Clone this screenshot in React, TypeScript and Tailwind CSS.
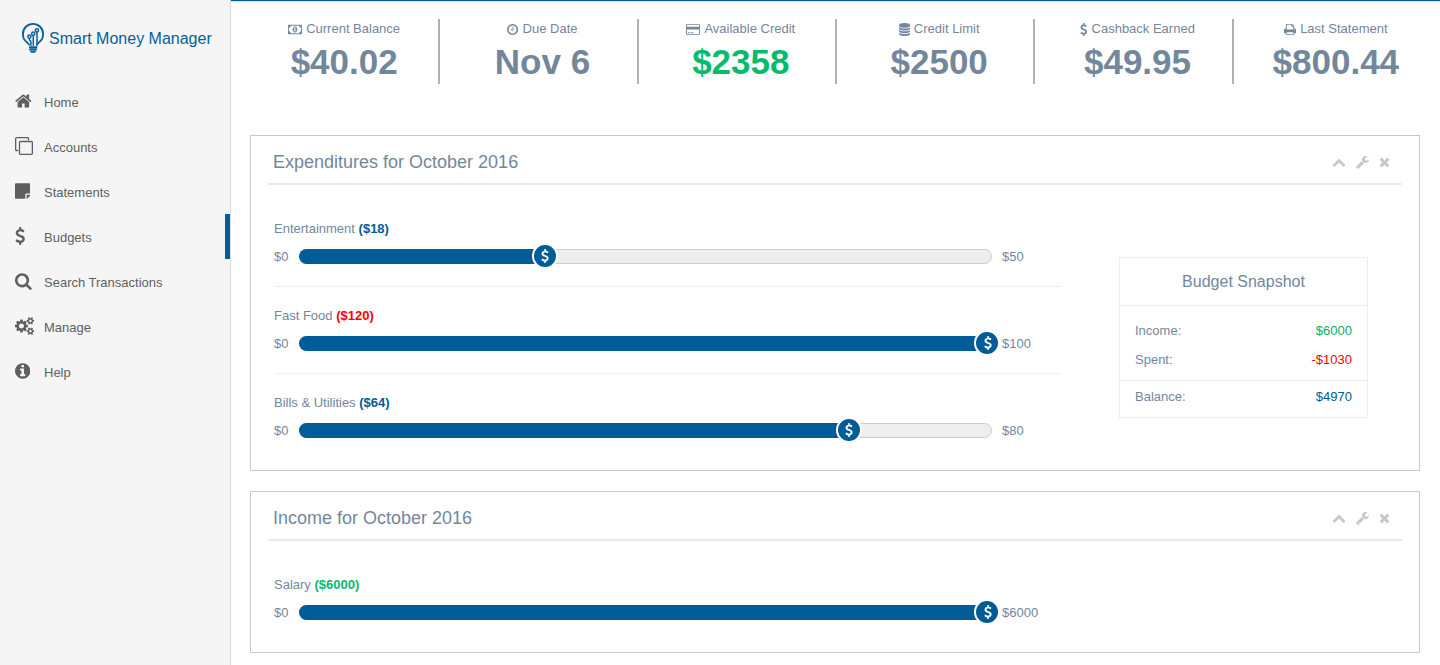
import { useState } from "react"
import type { ReactNode } from "react"
import clsx from "clsx"

// Font Awesome 4 glyphs: [viewBox, path]
const glyphs = {
  home: ["64 0 1664 1792", "M1472 992v480q0 26-19 45t-45 19h-384v-384h-256v384h-384q-26 0-45-19t-19-45v-480q0-1 .5-3t.5-3l575-474 575 474q1 2 1 6zm223-69l-62 74q-8 9-21 11h-3q-13 0-21-7l-692-577-692 577q-12 8-24 7-13-2-21-11l-62-74q-8-10-7-23.5t11-21.5l719-599q32-26 76-26t76 26l244 204v-195q0-14 9-23t23-9h192q14 0 23 9t9 23v408l219 182q10 8 11 21.5t-7 23.5z"],
  clone: ["0 0 1792 1792", "M1664 1632v-1088q0-13-9.5-22.5t-22.5-9.5h-1088q-13 0-22.5 9.5t-9.5 22.5v1088q0 13 9.5 22.5t22.5 9.5h1088q13 0 22.5-9.5t9.5-22.5zm128-1088v1088q0 66-47 113t-113 47h-1088q-66 0-113-47t-47-113v-1088q0-66 47-113t113-47h1088q66 0 113 47t47 113zm-384-384v160h-128v-160q0-13-9.5-22.5t-22.5-9.5h-1088q-13 0-22.5 9.5t-9.5 22.5v1088q0 13 9.5 22.5t22.5 9.5h160v128h-160q-66 0-113-47t-47-113v-1088q0-66 47-113t113-47h1088q66 0 113 47t47 113z"],
  note: ["128 0 1536 1792", "M1152 1248v416h-928q-40 0-68-28t-28-68v-1344q0-40 28-68t68-28h1344q40 0 68 28t28 68v928h-416q-40 0-68 28t-28 68zm128 32h381q-15 82-65 132l-184 184q-50 50-132 65v-381z"],
  dollar: ["384 0 1024 1792", "M1362 1185q0 153-99.5 263.5t-258.5 136.5v175q0 14-9 23t-23 9h-135q-13 0-22.5-9.5t-9.5-22.5v-175q-66-9-127.5-31t-101.5-44.5-74-48-46.5-37.5-17.5-18q-17-21-2-41l103-135q7-10 23-12 15-2 24 9l2 2q113 99 243 125 37 8 74 8 81 0 142.5-43t61.5-122q0-28-15-53t-33.5-42-58.5-37.5-66-32-80-32.5q-39-16-61.5-25t-61.5-26.5-62.5-31-56.5-35.5-53.5-42.5-43.5-49-35.5-58-21-66.5-8.5-78q0-138 98-242t255-134v-180q0-13 9.5-22.5t22.5-9.5h135q14 0 23 9t9 23v176q57 6 110.5 23t87 33.5 63.5 37.5 39 29 15 14q17 18 5 38l-81 146q-8 15-23 16-14 3-27-7-3-3-14.5-12t-39-26.5-58.5-32-74.5-26-85.5-11.5q-95 0-155 43t-60 111q0 26 8.5 48t29.5 41.5 39.5 33 56 31 60.5 27 70 27.5q53 20 81 31.5t76 35 75.5 42.5 62 50 53 63.5 31.5 76.5 13 94z"],
  search: ["64 0 1664 1792", "M1216 832q0-185-131.5-316.5t-316.5-131.5-316.5 131.5-131.5 316.5 131.5 316.5 316.5 131.5 316.5-131.5 131.5-316.5zm512 832q0 52-38 90t-90 38q-54 0-90-38l-343-342q-179 124-399 124-143 0-273.5-55.5t-225-150-150-225-55.5-273.5 55.5-273.5 150-225 225-150 273.5-55.5 273.5 55.5 225 150 150 225 55.5 273.5q0 220-124 399l343 343q37 37 37 90z"],
  cogs: ["0 0 1920 1792", "M896 896q0-106-75-181t-181-75-181 75-75 181 75 181 181 75 181-75 75-181zm768 512q0-52-38-90t-90-38-90 38-38 90q0 53 37.5 90.5t90.5 37.5 90.5-37.5 37.5-90.5zm0-1024q0-52-38-90t-90-38-90 38-38 90q0 53 37.5 90.5t90.5 37.5 90.5-37.5 37.5-90.5zm-384 421v185q0 10-7 19.5t-16 10.5l-155 24q-11 35-32 76 34 48 90 115 7 11 7 20 0 12-7 19-23 30-82.5 89.5t-78.5 59.5q-11 0-21-7l-115-90q-37 19-77 31-11 108-23 155-7 24-30 24h-186q-11 0-20-7.5t-10-17.5l-23-153q-34-10-75-31l-118 89q-7 7-20 7-11 0-21-8-144-133-144-160 0-9 7-19 10-14 41-53t47-61q-23-44-35-82l-152-24q-10-1-17-9.5t-7-19.5v-185q0-10 7-19.5t16-10.5l155-24q11-35 32-76-34-48-90-115-7-11-7-20 0-12 7-20 22-30 82-89t79-59q11 0 21 7l115 90q34-18 77-32 11-108 23-154 7-24 30-24h186q11 0 20 7.5t10 17.5l23 153q34 10 75 31l118-89q8-7 20-7 11 0 21 8 144 133 144 160 0 8-7 19-12 16-42 54t-45 60q23 48 34 82l152 23q10 2 17 10.5t7 19.5zm640 533v140q0 16-149 31-12 27-30 52 51 113 51 138 0 4-4 7-122 71-124 71-8 0-46-47t-52-68q-20 2-30 2t-30-2q-14 21-52 68t-46 47q-2 0-124-71-4-3-4-7 0-25 51-138-18-25-30-52-149-15-149-31v-140q0-16 149-31 13-29 30-52-51-113-51-138 0-4 4-7 4-2 35-20t59-34 30-16q8 0 46 46.5t52 67.5q20-2 30-2t30 2q51-71 92-112l6-2q4 0 124 70 4 3 4 7 0 25-51 138 17 23 30 52 149 15 149 31zm0-1024v140q0 16-149 31-12 27-30 52 51 113 51 138 0 4-4 7-122 71-124 71-8 0-46-47t-52-68q-20 2-30 2t-30-2q-14 21-52 68t-46 47q-2 0-124-71-4-3-4-7 0-25 51-138-18-25-30-52-149-15-149-31v-140q0-16 149-31 13-29 30-52-51-113-51-138 0-4 4-7 4-2 35-20t59-34 30-16q8 0 46 46.5t52 67.5q20-2 30-2t30 2q51-71 92-112l6-2q4 0 124 70 4 3 4 7 0 25-51 138 17 23 30 52 149 15 149 31z"],
  info: ["128 0 1536 1792", "M1152 1376v-160q0-14-9-23t-23-9h-96v-512q0-14-9-23t-23-9h-320q-14 0-23 9t-9 23v160q0 14 9 23t23 9h96v320h-96q-14 0-23 9t-9 23v160q0 14 9 23t23 9h448q14 0 23-9t9-23zm-128-896v-160q0-14-9-23t-23-9h-192q-14 0-23 9t-9 23v160q0 14 9 23t23 9h192q14 0 23-9t9-23zm640 416q0 209-103 385.5t-279.5 279.5-385.5 103-385.5-103-279.5-279.5-103-385.5 103-385.5 279.5-279.5 385.5-103 385.5 103 279.5 279.5 103 385.5z"],
  money: ["0 0 1920 1792", "M768 1152h384v-96h-128v-448h-114l-148 137 77 80q42-37 55-57h2v288h-128v96zm512-256q0 70-21 142t-59.5 134-101.5 101-138 39-138-39-101.5-101-59.5-134-21-142 21-142 59.5-134 101.5-101 138-39 138 39 101.5 101 59.5 134 21 142zm512 256v-512q-106 0-181-75t-75-181h-1152q0 106-75 181t-181 75v512q106 0 181 75t75 181h1152q0-106 75-181t181-75zm128-832v1152q0 26-19 45t-45 19h-1792q-26 0-45-19t-19-45v-1152q0-26 19-45t45-19h1792q26 0 45 19t19 45z"],
  clock: ["128 0 1536 1792", "M1024 544v448q0 14-9 23t-23 9h-320q-14 0-23-9t-9-23v-64q0-14 9-23t23-9h224v-352q0-14 9-23t23-9h64q14 0 23 9t9 23zm416 352q0-148-73-273t-198-198-273-73-273 73-198 198-73 273 73 273 198 198 273 73 273-73 198-198 73-273zm224 0q0 209-103 385.5t-279.5 279.5-385.5 103-385.5-103-279.5-279.5-103-385.5 103-385.5 279.5-279.5 385.5-103 385.5 103 279.5 279.5 103 385.5z"],
  card: ["0 0 1920 1792", "M1760 128q66 0 113 47t47 113v1216q0 66-47 113t-113 47h-1600q-66 0-113-47t-47-113v-1216q0-66 47-113t113-47h1600zm-1600 128q-13 0-22.5 9.5t-9.5 22.5v224h1664v-224q0-13-9.5-22.5t-22.5-9.5h-1600zm1600 1280q13 0 22.5-9.5t9.5-22.5v-608h-1664v608q0 13 9.5 22.5t22.5 9.5h1600zm-1504-128v-128h256v128h-256zm384 0v-128h384v128h-384z"],
  database: ["128 0 1536 1792", "M896 768q237 0 443-43t325-127v170q0 69-103 128t-280 93.5-385 34.5-385-34.5-280-93.5-103-128v-170q119 84 325 127t443 43zm0 768q237 0 443-43t325-127v170q0 69-103 128t-280 93.5-385 34.5-385-34.5-280-93.5-103-128v-170q119 84 325 127t443 43zm0-384q237 0 443-43t325-127v170q0 69-103 128t-280 93.5-385 34.5-385-34.5-280-93.5-103-128v-170q119 84 325 127t443 43zm0-1152q208 0 385 34.5t280 93.5 103 128v128q0 69-103 128t-280 93.5-385 34.5-385-34.5-280-93.5-103-128v-128q0-69 103-128t280-93.5 385-34.5z"],
  print: ["64 0 1664 1792", "M448 1536h896v-256h-896v256zm0-640h896v-384h-160q-40 0-68-28t-28-68v-160h-640v640zm1152 64q0-26-19-45t-45-19-45 19-19 45 19 45 45 19 45-19 19-45zm128 0v416q0 13-9.5 22.5t-22.5 9.5h-224v160q0 40-28 68t-68 28h-960q-40 0-68-28t-28-68v-160h-224q-13 0-22.5-9.5t-9.5-22.5v-416q0-79 56.5-135.5t135.5-56.5h64v-544q0-40 28-68t68-28h672q40 0 88 20t76 48l152 152q28 28 48 76t20 88v256h64q79 0 135.5 56.5t56.5 135.5z"],
  chevronUp: ["0 0 1792 1792", "M1683 1331l-166 165q-19 19-45 19t-45-19l-531-531-531 531q-19 19-45 19t-45-19l-166-165q-19-19-19-45.5t19-45.5l742-741q19-19 45-19t45 19l742 741q19 19 19 45.5t-19 45.5z"],
  wrench: ["64 0 1664 1792", "M448 1472q0-26-19-45t-45-19-45 19-19 45 19 45 45 19 45-19 19-45zm644-420l-682 682q-37 37-90 37-52 0-91-37l-106-108q-38-36-38-90 0-53 38-91l681-681q39 98 114.5 173.5t173.5 114.5zm634-435q0 39-23 106-47 134-164.5 217.5t-258.5 83.5q-185 0-316.5-131.5t-131.5-316.5 131.5-316.5 316.5-131.5q58 0 121.5 16.5t107.5 46.5q16 11 16 28t-16 28l-293 169v224l193 107q5-3 79-48.5t135.5-81 70.5-35.5q15 0 23.5 10t8.5 25z"],
  close: ["192 0 1408 1792", "M1490 1322q0 40-28 68l-136 136q-28 28-68 28t-68-28l-294-294-294 294q-28 28-68 28t-68-28l-136-136q-28-28-28-68t28-68l294-294-294-294q-28-28-28-68t28-68l136-136q28-28 68-28t68 28l294 294 294-294q28-28 68-28t68 28l136 136q28 28 28 68t-28 68l-294 294 294 294q28 28 28 68z"],
}

type IconName = keyof typeof glyphs

const Icon = ({ name, className }: { name: IconName; className: string }) => (
  <svg viewBox={glyphs[name][0]} fill="currentColor" aria-hidden="true" className={className}>
    <path d={glyphs[name][1]} />
  </svg>
)

const Logo = () => (
  <svg viewBox="0 0 24 32" fill="none" stroke="currentColor" aria-hidden="true" className="h-8 w-6">
    <path strokeWidth="1.8" d="M8.3 23.4C7.8 21.4 6.2 20.6 4.4 18.9C2.7 17.2 1.9 14.6 1.9 11.9a10.1 10.1 0 0 1 20.2 0c0 2.7-.8 5.3-2.500 7C17.8 20.6 16.2 21.4 15.7 23.4" />
    <path strokeWidth="1.5" d="M8.4 16.2v1.600l1.500 1.700v4.300M12.300 13.400v10.400M16 10v13.800" />
    <g strokeWidth="1.5">
      <circle cx="8.4" cy="14.6" r="1.6" />
      <circle cx="12.3" cy="11.7" r="1.6" />
      <circle cx="16" cy="8.3" r="1.6" />
    </g>
    <path strokeWidth="1.9" d="M8 25.2h8.200M8.300 27.500h7.600" />
    <path fill="currentColor" stroke="none" d="M8.7 28.800h6.700l-1.400 2h-3.900z" />
  </svg>
)

const menu: { label: string; icon: IconName }[] = [
  { label: "Home", icon: "home" },
  { label: "Accounts", icon: "clone" },
  { label: "Statements", icon: "note" },
  { label: "Budgets", icon: "dollar" },
  { label: "Search Transactions", icon: "search" },
  { label: "Manage", icon: "cogs" },
  { label: "Help", icon: "info" },
]

const stats: { label: string; value: string; icon: IconName; positive?: boolean }[] = [
  { label: "Current Balance", value: "$40.02", icon: "money" },
  { label: "Due Date", value: "Nov 6", icon: "clock" },
  { label: "Available Credit", value: "$2358", icon: "card", positive: true },
  { label: "Credit Limit", value: "$2500", icon: "database" },
  { label: "Cashback Earned", value: "$49.95", icon: "dollar" },
  { label: "Last Statement", value: "$800.44", icon: "print" },
]

const Sidebar = () => (
  <aside className="w-[231px] shrink-0 border-r border-[#dcdcdc] bg-[#f5f5f5]">
    <a href="#" className="flex h-[79px] items-start gap-1 pt-[22px] pl-[21px] text-base leading-[34px] text-[#03619b]">
      <Logo />
      <span>Smart Money Manager</span>
    </a>
    <nav>
      <ul>
        {menu.map((item) => (
          <li key={item.label}>
            <a
              href="#"
              className={clsx(
                "flex h-[45px] items-start border-r-[5px] pt-[13px] pl-[15px] leading-[22px] text-[#5f5f5f]",
                item.label === "Budgets" ? "border-[#005c97]" : "border-transparent"
              )}
            >
              <span className="w-[29px]">
                <Icon name={item.icon} className="h-[18px] w-auto" />
              </span>
              {item.label}
            </a>
          </li>
        ))}
      </ul>
    </nav>
  </aside>
)

const Stats = () => (
  <div className="grid grid-cols-6 pt-[17px] pr-2.5 pb-[51px] pl-[9px] text-center">
    {stats.map((stat) => (
      <div key={stat.label} className="border-l-2 border-[#adb2b5] pl-2 first:border-transparent">
        <div className="flex items-center justify-center gap-1 leading-5">
          <Icon name={stat.icon} className="h-[13px] w-auto" />
          {stat.label}
        </div>
        <div className={clsx("text-[35px] leading-[45px] font-bold", stat.positive && "text-[#05bc6c]")}>
          {stat.value}
        </div>
      </div>
    ))}
  </div>
)

const Panel = ({ title, children }: { title: string; children: ReactNode }) => (
  <section className="border border-[#c8c8c8] px-[17px] pb-[30px]">
    <header className="flex items-center justify-between border-b-2 border-[#e6e9ed] pt-4 pr-3 pb-[11px] pl-[5px]">
      <h2 className="text-lg leading-5">{title}</h2>
      <div className="flex gap-2.5 text-[#c5c7cb]">
        <button type="button" aria-label="Collapse">
          <Icon name="chevronUp" className="h-3.5 w-auto" />
        </button>
        <button type="button" aria-label="Settings">
          <Icon name="wrench" className="h-3.5 w-auto" />
        </button>
        <button type="button" aria-label="Close">
          <Icon name="close" className="h-3.5 w-auto" />
        </button>
      </div>
    </header>
    <div className="grid grid-cols-[minmax(0,1fr)_340px] pl-1.5">{children}</div>
  </section>
)

type BudgetProps = { id: string; label: string; amount: number; max: number; tone: string }

const BudgetSlider = ({ id, label, amount, max, tone }: BudgetProps) => {
  const [value, setValue] = useState(amount)
  const percent = Math.min(value / max, 1) * 100

  return (
    <div className="border-b border-[#eeeeee] py-5 first:pt-0 last:border-0 last:pb-0">
      <label htmlFor={id} className="block leading-[18px]">
        {label} <b className={tone}>(${value})</b>
      </label>
      <div className="mt-[9px] flex h-[19px] items-center">
        <span className="w-[25px]">$0</span>
        <div className="relative h-[15px] flex-1 rounded-full border border-[#cccccc] bg-[#eeeeee]">
          <div className="absolute -inset-px right-auto rounded-full bg-[#005c97]" style={{ width: `${percent}%` }} />
          <div
            className="absolute -top-[7px] -ml-[17px] flex size-[26px] items-center justify-center rounded-full border-2 border-white bg-[#005c97] pl-px text-white"
            style={{ left: `${percent}%` }}
          >
            <Icon name="dollar" className="h-3.5 w-auto" />
          </div>
          <input
            id={id}
            type="range"
            min={0}
            max={max}
            value={Math.min(value, max)}
            onChange={(e) => setValue(Number(e.target.value))}
            className="absolute inset-0 w-full cursor-pointer opacity-0"
          />
        </div>
        <span className="w-[70px] pl-2.5">${max}</span>
      </div>
    </div>
  )
}

const Snapshot = () => (
  <div className="pt-[72px] pr-[34px] pl-[57px]">
    <div className="border border-[#ededed]">
      <h3 className="border-b border-[#ededed] text-center text-base leading-[47px]">Budget Snapshot</h3>
      <dl className="leading-[18px]">
        <div className="flex justify-between px-[15px] pt-4">
          <dt>Income:</dt>
          <dd className="text-[#05b05f]">$6000</dd>
        </div>
        <div className="flex justify-between px-[15px] py-[11px]">
          <dt>Spent:</dt>
          <dd className="text-[#ff0000]">-$1030</dd>
        </div>
        <div className="flex justify-between border-t border-[#ededed] px-[15px] pt-[7px] pb-[11px]">
          <dt>Balance:</dt>
          <dd className="text-[#005c97]">$4970</dd>
        </div>
      </dl>
    </div>
  </div>
)

const App = () => {
  return (
    <div className="flex min-h-screen bg-white font-['Liberation_Sans',Arial,sans-serif] text-[13px] text-[#73879c]">
      <Sidebar />
      <main className="min-w-0 flex-1">
        {/* Accent line above the stat tiles */}
        <div className="h-0.5 border-t border-b border-t-[#005c97] border-b-[#d5e3ee]" />
        <Stats />
        <div className="flex flex-col gap-5 pr-5 pl-[19px]">
          <Panel title="Expenditures for October 2016">
            <div className="pt-[35px]">
              <BudgetSlider id="entertainment" label="Entertainment" amount={18} max={50} tone="text-[#005c97]" />
              <BudgetSlider id="fast-food" label="Fast Food" amount={120} max={100} tone="text-[#ff0000]" />
              <BudgetSlider id="bills" label="Bills & Utilities" amount={64} max={80} tone="text-[#005c97]" />
            </div>
            <Snapshot />
          </Panel>
          <Panel title="Income for October 2016">
            <div className="pt-[35px]">
              <BudgetSlider id="salary" label="Salary" amount={6000} max={6000} tone="text-[#05bc6c]" />
            </div>
          </Panel>
        </div>
      </main>
    </div>
  )
}

export default App
